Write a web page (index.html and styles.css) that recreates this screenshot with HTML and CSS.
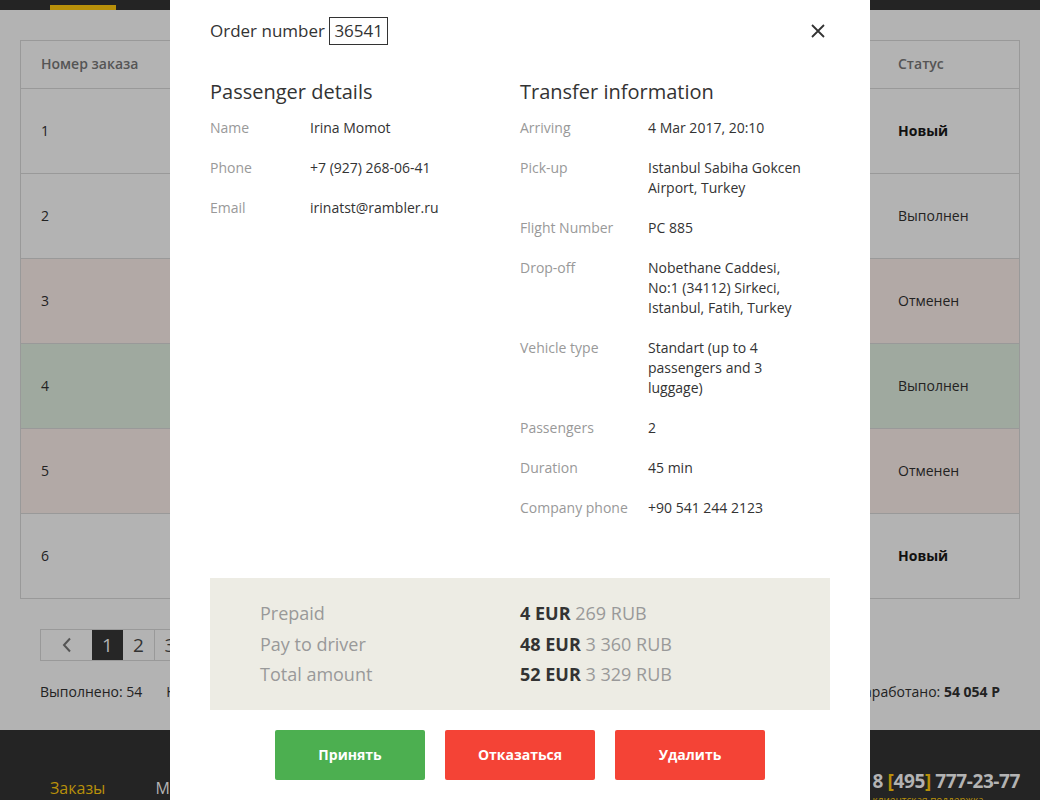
FILE: index.html
```html
<!DOCTYPE html>
<html lang="ru">
<head>
<meta charset="utf-8">
<title>Заказы</title>
<link rel="stylesheet" href="styles.css">
</head>
<body>
<div class="page">
  <header class="topbar"><div class="tab"></div></header>
  <main class="content">
    <div class="orders">
      <div class="row head"><div class="cell">Номер заказа</div><div class="cell">Статус</div></div>
      <div class="row"><div class="cell">1</div><div class="cell strong">Новый</div></div>
      <div class="row"><div class="cell">2</div><div class="cell">Выполнен</div></div>
      <div class="row cancel"><div class="cell">3</div><div class="cell">Отменен</div></div>
      <div class="row done"><div class="cell">4</div><div class="cell">Выполнен</div></div>
      <div class="row cancel"><div class="cell">5</div><div class="cell">Отменен</div></div>
      <div class="row"><div class="cell">6</div><div class="cell strong">Новый</div></div>
    </div>
    <div class="pager">
      <span class="pg prev"><svg width="12" height="16" viewBox="0 0 12 16"><path d="M9 1.5 L3 8 L9 14.5" fill="none" stroke="#555" stroke-width="2"/></svg></span>
      <span class="pg active">1</span>
      <span class="pg">2</span>
      <span class="pg">3</span>
    </div>
    <div class="stats">
      <span>Выполнено: 54</span>
      <span class="spacer">Новых: 2</span>
      <span class="earned">Заработано: <b>54 054 Р</b></span>
    </div>
  </main>
  <footer class="footer">
    <nav class="nav"><span class="nav-item current">Заказы</span><span class="nav-item">Мои данные</span></nav>
    <div class="support">
      <div class="phone">8 <span class="br">[</span>495<span class="br">]</span> 777-23-77</div>
      <div class="support-label">клиентская поддержка</div>
    </div>
  </footer>
</div>

<div class="modal">
  <div class="modal-head">
    <div class="title">Order number <span class="num">36541</span></div>
    <svg class="close" width="14" height="14" viewBox="0 0 14 14"><path d="M1 1 L13 13 M13 1 L1 13" stroke="#333" stroke-width="1.8" fill="none"/></svg>
  </div>
  <div class="cols">
    <section class="col left">
      <h2>Passenger details</h2>
      <div class="info"><div class="lbl">Name</div><div class="val">Irina Momot</div></div>
      <div class="info"><div class="lbl">Phone</div><div class="val">+7 (927) 268-06-41</div></div>
      <div class="info"><div class="lbl">Email</div><div class="val">irinatst@rambler.ru</div></div>
    </section>
    <section class="col right">
      <h2>Transfer information</h2>
      <div class="info"><div class="lbl">Arriving</div><div class="val">4 Mar 2017, 20:10</div></div>
      <div class="info"><div class="lbl">Pick-up</div><div class="val">Istanbul Sabiha Gokcen Airport, Turkey</div></div>
      <div class="info"><div class="lbl">Flight Number</div><div class="val">PC 885</div></div>
      <div class="info"><div class="lbl">Drop-off</div><div class="val">Nobethane Caddesi, No:1 (34112) Sirkeci, Istanbul, Fatih, Turkey</div></div>
      <div class="info"><div class="lbl">Vehicle type</div><div class="val">Standart (up to 4 passengers and 3 luggage)</div></div>
      <div class="info"><div class="lbl">Passengers</div><div class="val">2</div></div>
      <div class="info"><div class="lbl">Duration</div><div class="val">45 min</div></div>
      <div class="info"><div class="lbl">Company phone</div><div class="val">+90 541 244 2123</div></div>
    </section>
  </div>
  <div class="summary">
    <div class="s-lbl">Prepaid</div><div class="s-val"><b>4 EUR</b> 269 RUB</div>
    <div class="s-lbl">Pay to driver</div><div class="s-val"><b>48 EUR</b> 3 360 RUB</div>
    <div class="s-lbl">Total amount</div><div class="s-val"><b>52 EUR</b> 3 329 RUB</div>
  </div>
  <div class="actions">
    <button class="btn accept">Принять</button>
    <button class="btn decline">Отказаться</button>
    <button class="btn delete">Удалить</button>
  </div>
</div>
</body>
</html>
```

FILE: styles.css
```css
* { box-sizing: border-box; }
html, body { margin: 0; padding: 0; }
body {
  width: 1040px;
  height: 800px;
  overflow: hidden;
  position: relative;
  font-family: "Open Sans", "Noto Sans", sans-serif;
  background: #b3b3b3;
  color: #222;
}
.page {
  height: 800px;
  display: flex;
  flex-direction: column;
}
.topbar {
  height: 10px;
  background: #242424;
  padding-left: 50px;
  display: flex;
  align-items: flex-end;
}
.tab {
  width: 66px;
  height: 5px;
  background: #b8900a;
}
.content {
  flex: 1;
  padding: 30px 20px 0;
}
.orders {
  border: 1px solid #999;
  border-bottom: none;
}
.row {
  display: grid;
  grid-template-columns: 1fr 141px;
  height: 85px;
  border-bottom: 1px solid #999;
  font-size: 14px;
  color: #222;
}
.row.head {
  height: 48px;
  font-weight: 600;
  font-size: 14px;
  color: #555;
}
.row.cancel { background: #b2a9a6; }
.row.done { background: #9fa99f; }
.cell {
  display: flex;
  align-items: center;
  padding-left: 20px;
  padding-bottom: 2px;
}
.row.head .cell { padding-bottom: 3px; }
.cell.strong { font-weight: 700; font-size: 14px; color: #111; }
.pager {
  margin-top: 30px;
  margin-left: 20px;
  display: inline-flex;
  border: 1px solid #999;
  height: 32px;
}
.pg {
  width: 31px;
  display: flex;
  align-items: center;
  justify-content: center;
  font-size: 19px;
  color: #333;
  border-left: 1px solid #999;
}
.pg.prev { width: 51px; border-left: none; }
.pg.active { background: #262626; color: #b3b3b3; border-left: none; }
.pg.active + .pg { border-left: none; }
.stats {
  margin: 22px 20px 0;
  display: flex;
  font-size: 14px;
  color: #222;
  line-height: 18px;
}
.stats .spacer { margin-left: 24px; }
.stats .earned { margin-left: auto; }
.stats b { font-weight: 700; }
.footer {
  height: 70px;
  background: #242424;
  display: flex;
  justify-content: space-between;
  align-items: flex-start;
  padding: 38px 20px 0 50px;
  overflow: hidden;
}
.nav { display: flex; gap: 50px; font-size: 16px; color: #b3b3b3; margin-top: 9px; line-height: 22px; }
.nav-item.current { color: #b8900a; }
.support { text-align: left; }
.phone {
  font-size: 19px;
  font-weight: 700;
  letter-spacing: -0.4px;
  color: #b3b3b3;
  line-height: 26px;
  white-space: nowrap;
}
.phone .br { color: #b8900a; }
.support-label { font-size: 10px; color: #b8900a; line-height: 12px; white-space: nowrap; }

.modal {
  position: absolute;
  left: 170px;
  top: 0;
  width: 700px;
  height: 800px;
  background: #fff;
  padding: 17px 40px 0;
  color: #333;
}
.modal-head {
  display: flex;
  justify-content: space-between;
  align-items: center;
  height: 28px;
}
.title { font-size: 17px; color: #333; }
.num {
  display: inline-block;
  border: 1px solid #333;
  padding: 0 4px;
  line-height: 26px;
}
.close { margin-right: 5px; }
.cols {
  display: grid;
  grid-template-columns: 310px 1fr;
  margin-top: 35px;
}
.col h2 {
  margin: 0 0 14px;
  font-size: 20px;
  font-weight: 400;
  line-height: 24px;
  color: #333;
}
.info {
  display: grid;
  font-size: 14px;
  line-height: 20px;
  margin-bottom: 20px;
}
.left .info { grid-template-columns: 100px 1fr; }
.right .info { grid-template-columns: 128px 1fr; }
.lbl { color: #999; }
.val { color: #333; padding-right: 20px; }
.summary {
  margin-top: 40px;
  background: #edece4;
  padding: 20px 50px 20px;
  display: grid;
  grid-template-columns: 260px 1fr;
  font-size: 18px;
  line-height: 30.5px;
  color: #999;
}
.s-val b { color: #333; font-weight: 700; }
.actions {
  margin-top: 20px;
  display: flex;
  justify-content: center;
  gap: 20px;
}
.btn {
  width: 150px;
  height: 50px;
  border: none;
  border-radius: 2px;
  color: #fff;
  font-family: "Open Sans", "Noto Sans", sans-serif;
  font-size: 14px;
  font-weight: 700;
}
.btn.accept { background: #4caf50; }
.btn.decline, .btn.delete { background: #f44336; }
```
